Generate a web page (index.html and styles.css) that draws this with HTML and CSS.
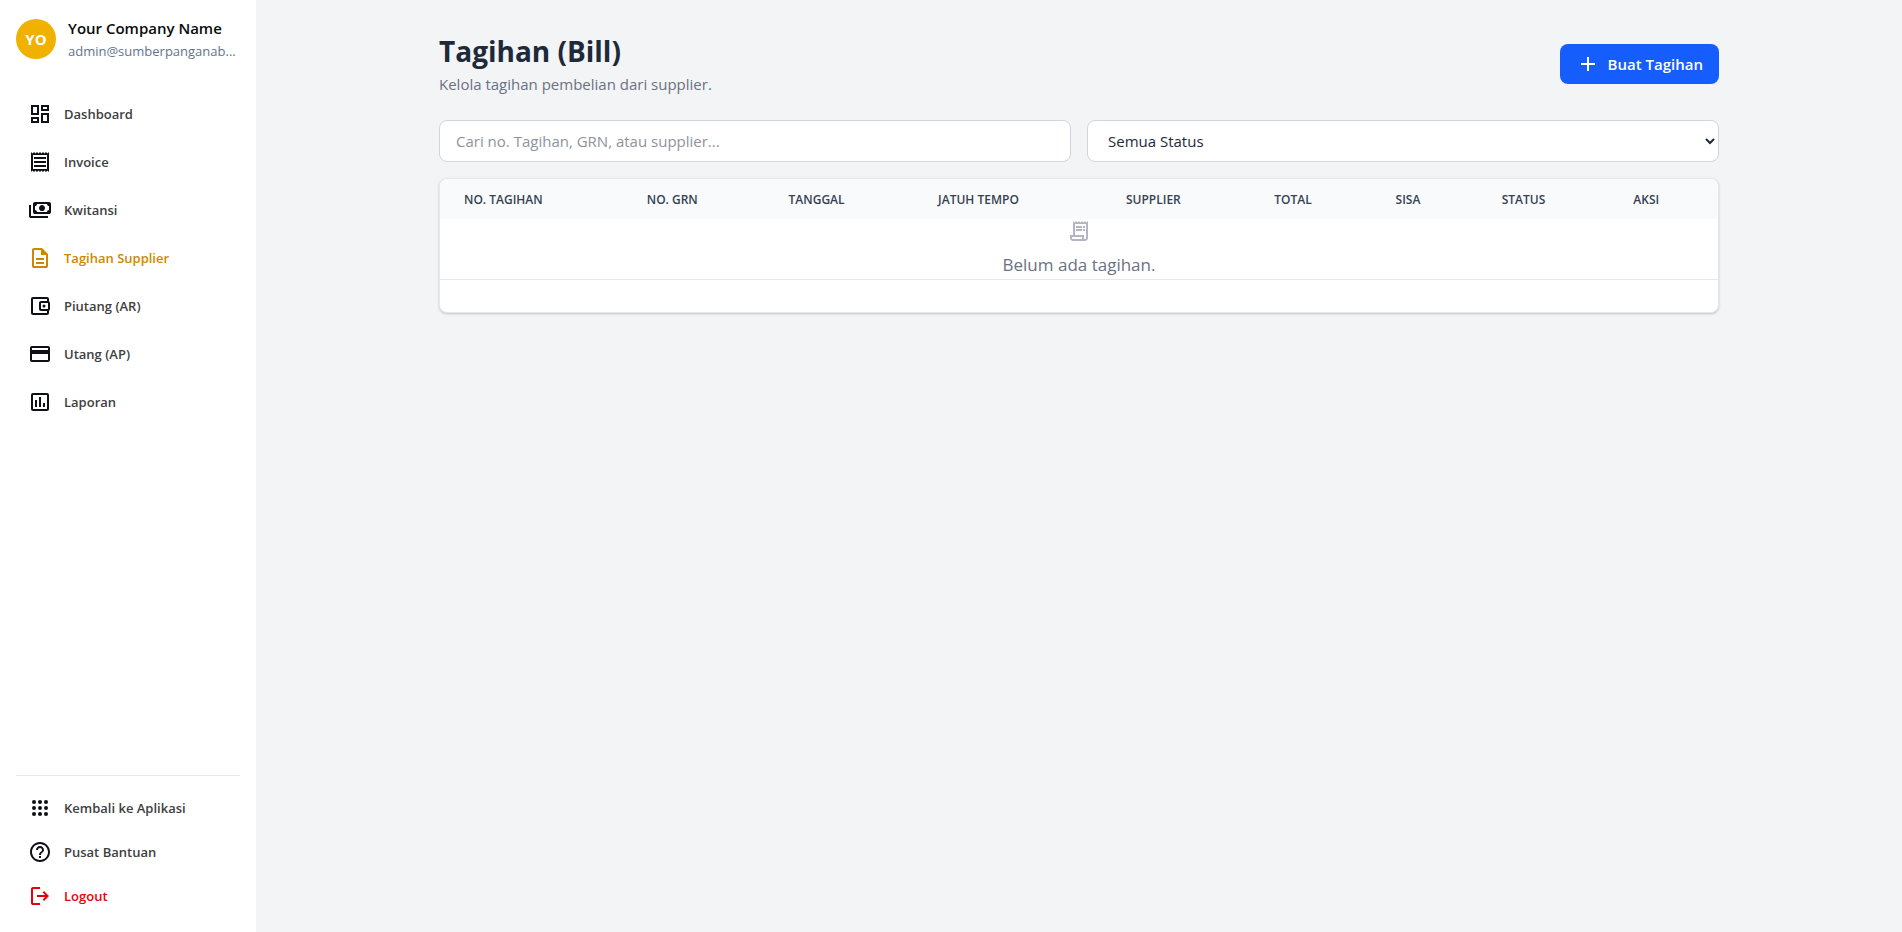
FILE: index.html
```html
<!DOCTYPE html>
<html lang="id">
<head>
<meta charset="utf-8">
<meta name="viewport" content="width=device-width, initial-scale=1">
<title>Tagihan (Bill)</title>
<link rel="stylesheet" href="styles.css">
</head>
<body>
<div class="app">
  <aside class="sidebar">
    <div class="profile">
      <div class="avatar">YO</div>
      <div class="profile-text">
        <div class="company">Your Company Name</div>
        <div class="email">admin@sumberpanganab...</div>
      </div>
    </div>
    <nav class="nav">
      <a class="nav-link" href="#"><svg class="icon" viewBox="0 0 24 24"><path d="M19 5v2h-4V5h4M9 5v6H5V5h4m10 8v6h-4v-6h4M9 17v2H5v-2h4M21 3h-8v6h8V3zM11 3H3v10h8V3zm10 8h-8v10h8V11zm-10 4H3v6h8v-6z"/></svg><span>Dashboard</span></a>
      <a class="nav-link" href="#"><svg class="icon" viewBox="0 0 24 24"><path d="M19.5 3.5 18 2l-1.5 1.5L15 2l-1.5 1.5L12 2l-1.5 1.5L9 2 7.5 3.5 6 2 4.5 3.5 3 2v20l1.5-1.5L6 22l1.5-1.5L9 22l1.5-1.5L12 22l1.5-1.5L15 22l1.5-1.5L18 22l1.5-1.5L21 22V2l-1.5 1.5zM19 19.09H5V4.91h14v14.18zM6 15h12v2H6zm0-4h12v2H6zm0-4h12v2H6z"/></svg><span>Invoice</span></a>
      <a class="nav-link" href="#"><svg class="icon" viewBox="0 -960 960 960"><path d="M560-440q-50 0-85-35t-35-85q0-50 35-85t85-35q50 0 85 35t35 85q0 50-35 85t-85 35ZM280-320q-33 0-56.5-23.5T200-400v-320q0-33 23.5-56.5T280-800h560q33 0 56.5 23.5T920-720v320q0 33-23.5 56.5T840-320H280Zm80-80h400q0-33 23.5-56.5T840-480v-160q-33 0-56.5-23.5T760-720H360q0 33-23.5 56.5T280-640v160q33 0 56.5 23.5T360-400Zm440 240H120q-33 0-56.5-23.5T40-240v-440h80v440h680v80Z"/></svg><span>Kwitansi</span></a>
      <a class="nav-link is-active" href="#" aria-current="page"><svg class="icon" viewBox="0 -960 960 960"><path d="M320-240h320v-80H320v80Zm0-160h320v-80H320v80ZM240-80q-33 0-56.5-23.5T160-160v-640q0-33 23.5-56.5T240-880h320l240 240v480q0 33-23.5 56.5T720-80H240Zm280-520v-200H240v640h480v-440H520Z"/></svg><span>Tagihan Supplier</span></a>
      <a class="nav-link" href="#"><svg class="icon" viewBox="0 0 24 24"><path d="M21 7.28V5c0-1.1-.9-2-2-2H5c-1.11 0-2 .9-2 2v14c0 1.1.89 2 2 2h14c1.1 0 2-.9 2-2v-2.28c.59-.35 1-.98 1-1.72V9c0-.74-.41-1.37-1-1.72zM20 9v6h-7V9h7zM5 19V5h14v2h-6c-1.1 0-2 .9-2 2v6c0 1.1.9 2 2 2h6v2H5z"/><circle cx="16" cy="12" r="1.5"/></svg><span>Piutang (AR)</span></a>
      <a class="nav-link" href="#"><svg class="icon" viewBox="0 0 24 24"><path d="M20 4H4c-1.11 0-1.99.89-1.99 2L2 18c0 1.11.89 2 2 2h16c1.11 0 2-.89 2-2V6c0-1.11-.89-2-2-2zm0 14H4v-6h16v6zm0-10H4V6h16v2z"/></svg><span>Utang (AP)</span></a>
      <a class="nav-link" href="#"><svg class="icon" viewBox="0 0 24 24"><path d="M19 3H5c-1.1 0-2 .9-2 2v14c0 1.1.9 2 2 2h14c1.1 0 2-.9 2-2V5c0-1.1-.9-2-2-2zm0 16H5V5h14v14zM7 10h2v7H7zm4-3h2v10h-2zm4 6h2v4h-2z"/></svg><span>Laporan</span></a>
    </nav>
    <div class="nav nav-bottom">
      <a class="nav-link" href="#"><svg class="icon" viewBox="0 0 24 24"><circle cx="6" cy="6" r="2"/><circle cx="12" cy="6" r="2"/><circle cx="18" cy="6" r="2"/><circle cx="6" cy="12" r="2"/><circle cx="12" cy="12" r="2"/><circle cx="18" cy="12" r="2"/><circle cx="6" cy="18" r="2"/><circle cx="12" cy="18" r="2"/><circle cx="18" cy="18" r="2"/></svg><span>Kembali ke Aplikasi</span></a>
      <a class="nav-link" href="#"><svg class="icon" viewBox="0 0 24 24"><path d="M11 18h2v-2h-2v2zm1-16C6.48 2 2 6.48 2 12s4.48 10 10 10 10-4.48 10-10S17.52 2 12 2zm0 18c-4.41 0-8-3.59-8-8s3.59-8 8-8 8 3.59 8 8-3.59 8-8 8zm0-14c-2.21 0-4 1.79-4 4h2c0-1.1.9-2 2-2s2 .9 2 2c0 2-3 1.75-3 5h2c0-2.25 3-2.5 3-5 0-2.21-1.79-4-4-4z"/></svg><span>Pusat Bantuan</span></a>
      <a class="nav-link is-danger" href="#"><svg class="icon" viewBox="0 -960 960 960"><path d="M200-120q-33 0-56.5-23.5T120-200v-560q0-33 23.5-56.5T200-840h280v80H200v560h280v80H200Zm440-160-55-58 102-102H360v-80h327L585-622l55-58 200 200-200 200Z"/></svg><span>Logout</span></a>
    </div>
  </aside>
  <main class="main">
    <div class="content">
      <header class="page-header">
        <div>
          <h1 class="title">Tagihan (Bill)</h1>
          <p class="subtitle">Kelola tagihan pembelian dari supplier.</p>
        </div>
        <button class="primary" type="button"><svg class="icon" viewBox="0 0 24 24"><path d="M19 13h-6v6h-2v-6H5v-2h6V5h2v6h6v2z"/></svg><span>Buat Tagihan</span></button>
      </header>
      <div class="filters">
        <input class="field" type="text" placeholder="Cari no. Tagihan, GRN, atau supplier..." aria-label="Cari tagihan">
        <select class="field field-select" aria-label="Status"><option>Semua Status</option></select>
      </div>
      <section class="card">
        <table class="table">
          <colgroup><col class="w-bill"><col class="w-grn"><col class="w-date"><col class="w-due"><col class="w-supplier"><col class="w-total"><col class="w-rest"><col class="w-status"><col></colgroup>
          <thead>
            <tr><th>NO. TAGIHAN</th><th>NO. GRN</th><th>TANGGAL</th><th>JATUH TEMPO</th><th>SUPPLIER</th><th>TOTAL</th><th>SISA</th><th>STATUS</th><th>AKSI</th></tr>
          </thead>
          <tbody>
            <tr><td class="empty" colspan="9"><svg class="icon empty-icon" viewBox="0 0 24 24"><path d="M19.5 3.5 18 2l-1.5 1.5L15 2l-1.5 1.5L12 2l-1.5 1.5L9 2 7.5 3.5 6 2v14H3v3c0 1.66 1.34 3 3 3h12c1.66 0 3-1.34 3-3V2l-1.5 1.5zM15 20H6c-.55 0-1-.45-1-1v-1h10v2zm4-1c0 .55-.45 1-1 1s-1-.45-1-1v-3H8V5h11v14zM9 7h6v2H9zM16 7h2v2h-2zM9 10h6v2H9zM16 10h2v2h-2z"/></svg><p class="empty-text">Belum ada tagihan.</p></td></tr>
          </tbody>
        </table>
      </section>
    </div>
  </main>
</div>
</body>
</html>
```
FILE: styles.css
```css
*, *::before, *::after { box-sizing: border-box; }
body, h1, p { margin: 0; }
body {
  font-family: "Segoe UI", "Open Sans", "Noto Sans", sans-serif;
  font-size: 15px;
  line-height: 24px;
  color: #1e2939;
  background: #f3f4f6;
}
.app { display: flex; min-height: 100vh; }
.icon { width: 24px; height: 24px; flex: none; fill: currentColor; }

.sidebar {
  width: 256px;
  flex: none;
  display: flex;
  flex-direction: column;
  padding: 16px;
  background: #fff;
}
.profile { display: flex; align-items: center; gap: 12px; }
.avatar {
  display: grid;
  place-items: center;
  flex: none;
  width: 40px;
  height: 40px;
  border-radius: 50%;
  background: #f0b100;
  color: #fff;
  font-weight: 700;
}
.profile-text { min-width: 0; }
.company { color: #0a0a0a; font-weight: 600; }
.email {
  color: #62748e;
  font-size: 13px;
  line-height: 22px;
  white-space: nowrap;
}
.nav { display: flex; flex-direction: column; gap: 8px; margin-top: 32px; }
.nav-link {
  display: flex;
  align-items: center;
  gap: 12px;
  padding: 8px 12px;
  color: #0f0f17;
  font-size: 13px;
  font-weight: 600;
  text-decoration: none;
}
.nav-link span { color: #404040; }
.nav-link.is-active, .nav-link.is-active span { color: #d08700; }
.nav-link.is-danger, .nav-link.is-danger span { color: #e7000b; }
.nav-bottom {
  gap: 4px;
  margin-top: auto;
  padding-top: 12px;
  border-top: 1px solid #e5e7eb;
}

.main { flex: 1; min-width: 0; padding: 32px; }
.content { max-width: 1280px; margin: 0 auto; }
.page-header { display: flex; align-items: center; justify-content: space-between; margin-bottom: 24px; }
.title { font-size: 28px; line-height: 38px; font-weight: 700; }
.subtitle { margin-top: 2px; color: #6a7282; }
.primary {
  display: flex;
  align-items: center;
  gap: 8px;
  padding: 8px 16px;
  border: 0;
  border-radius: 8px;
  background: #155dfc;
  color: #fff;
  font: inherit;
  font-weight: 600;
}
.filters { display: grid; grid-template-columns: 1fr 1fr; gap: 16px; margin-bottom: 16px; }
.field {
  width: 100%;
  height: 42px;
  padding: 8px 16px;
  border: 1px solid #d1d5dc;
  border-radius: 8px;
  background: #fff;
  color: #1e2939;
  font: inherit;
}
.field::placeholder { color: #8e939c; }
.field-select { padding-right: 0; }

.card {
  overflow: hidden;
  padding-bottom: 32px;
  border: 1px solid #e5e7eb;
  border-radius: 8px;
  background: #fff;
  box-shadow: 0 1px 3px rgba(0, 0, 0, 0.1), 0 1px 2px rgba(0, 0, 0, 0.1);
}
.table { width: 100%; table-layout: fixed; border-collapse: collapse; }
.table th {
  padding: 13px 24px 11px;
  background: #f9fafb;
  color: #364153;
  font-size: 12px;
  line-height: 16px;
  font-weight: 600;
  text-align: left;
  white-space: nowrap;
}
.w-bill { width: 14.3%; }
.w-grn { width: 11.1%; }
.w-date { width: 11.7%; }
.w-due { width: 14.7%; }
.w-supplier { width: 11.6%; }
.w-total { width: 9.5%; }
.w-rest { width: 8.3%; }
.w-status { width: 10.3%; }
.empty {
  padding: 0;
  border-bottom: 1px solid #e5e7eb;
  color: #6a7282;
  text-align: center;
}
.empty-icon { display: block; margin: 0 auto 8px; color: #b3b6c2; }
.empty-text { font-size: 17px; line-height: 28px; }
```
